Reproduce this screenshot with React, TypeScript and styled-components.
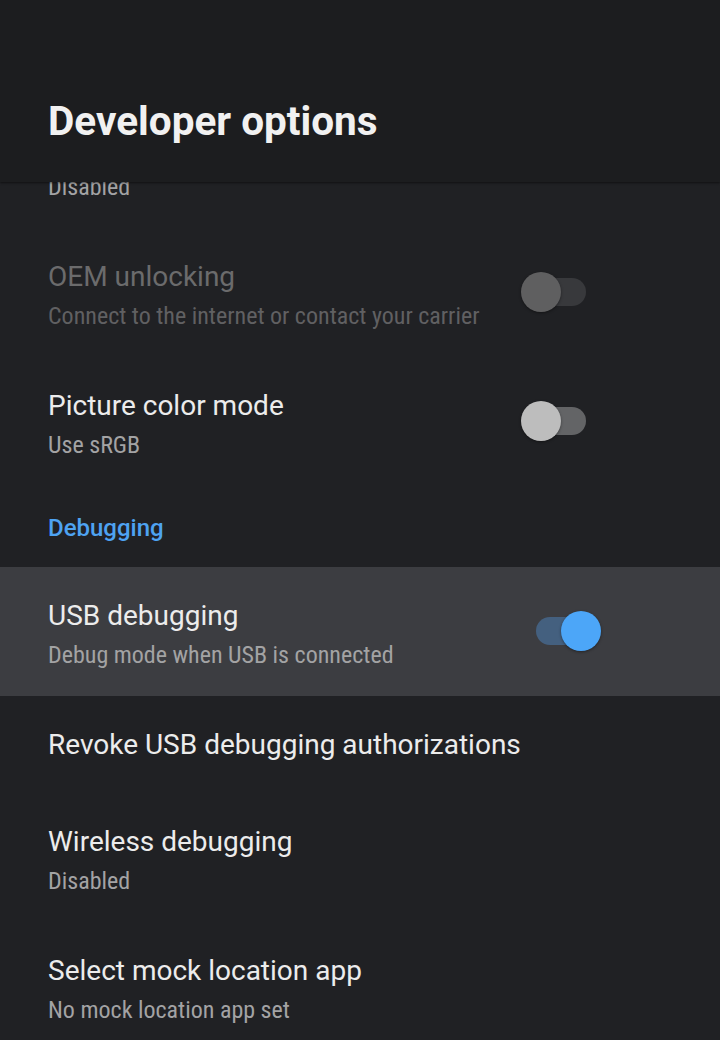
import React from 'react';
import styled, { createGlobalStyle } from 'styled-components';

const Global = createGlobalStyle`
  html, body { margin: 0; padding: 0; background: #202124; }
  body { font-family: Roboto, "Noto Sans", sans-serif; -webkit-font-smoothing: antialiased; }
  * { box-sizing: border-box; }
`;

const Screen = styled.div`
  position: relative;
  width: 720px;
  height: 1040px;
  overflow: hidden;
  background: #202124;
`;

const AppBar = styled.header`
  position: absolute;
  top: 0;
  left: 0;
  right: 0;
  height: 182px;
  padding: 97px 48px 0;
  background: #1c1d1f;
  box-shadow: 0 1px 2px rgba(0, 0, 0, 0.5);
  z-index: 2;
`;

const AppTitle = styled.h1`
  margin: 0;
  font-family: Roboto, "Noto Sans", sans-serif;
  font-weight: 700;
  font-size: 40.5px;
  line-height: 48px;
  color: #f1f1f1;
`;

const List = styled.div`
  display: flex;
  flex-direction: column;
  padding-top: 99px;
`;

const Row = styled.div<{ $summary: boolean; $active?: boolean }>`
  display: flex;
  align-items: center;
  padding: 31px 0 ${(p) => (p.$summary ? 25.7 : 30)}px 48px;
  background: ${(p) => (p.$active ? '#3c3d41' : 'transparent')};
`;

const TextCol = styled.div`
  flex: 1;
  min-width: 0;
  display: flex;
  flex-direction: column;
`;

const Title = styled.div<{ $disabled?: boolean }>`
  font-family: Roboto, "Noto Sans", sans-serif;
  font-size: 28px;
  line-height: 36px;
  color: ${(p) => (p.$disabled ? '#6b6b6c' : '#ececec')};
  white-space: nowrap;
`;

const Summary = styled.div<{ $disabled?: boolean }>`
  margin-top: 6.3px;
  font-family: "Roboto Condensed", Roboto, "Noto Sans", sans-serif;
  font-stretch: condensed;
  font-size: 24px;
  line-height: 30px;
  color: ${(p) => (p.$disabled ? '#606062' : '#a3a3a4')};
  white-space: nowrap;
`;

const Category = styled.div`
  padding: 26.8px 48px 24.2px;
  font-family: Roboto, "Noto Sans", sans-serif;
  font-weight: 500;
  font-size: 24px;
  line-height: 30px;
  color: #4ea3f2;
`;

const SwitchTrack = styled.span<{ $on: boolean; $disabled?: boolean }>`
  position: relative;
  flex: none;
  display: block;
  width: 64px;
  height: 28px;
  margin-right: ${(p) => (p.$on ? 120 : 134)}px;
  margin-top: -6px;
  border-radius: 14px;
  background: ${(p) => (p.$on ? '#44607f' : p.$disabled ? '#38393c' : '#636466')};
`;

const SwitchThumb = styled.span<{ $on: boolean; $disabled?: boolean }>`
  position: absolute;
  top: -6px;
  left: ${(p) => (p.$on ? 25 : -1)}px;
  width: 40px;
  height: 40px;
  border-radius: 50%;
  background: ${(p) => (p.$on ? '#4ca6f8' : p.$disabled ? '#5f5f60' : '#bdbdbd')};
  box-shadow: 0 1px 3px rgba(0, 0, 0, 0.4);
`;

type Item = {
  title: string;
  summary?: string;
  toggle?: boolean;
  on?: boolean;
  disabled?: boolean;
  active?: boolean;
};

const Switch = ({ on, disabled }: { on: boolean; disabled?: boolean }) => (
  <SwitchTrack $on={on} $disabled={disabled}>
    <SwitchThumb $on={on} $disabled={disabled} />
  </SwitchTrack>
);

const Pref = ({ item }: { item: Item }) => (
  <Row $summary={!!item.summary} $active={item.active}>
    <TextCol>
      <Title $disabled={item.disabled}>{item.title}</Title>
      {item.summary && <Summary $disabled={item.disabled}>{item.summary}</Summary>}
    </TextCol>
    {item.toggle && <Switch on={!!item.on} disabled={item.disabled} />}
  </Row>
);

const before: Item[] = [
  { title: 'Enable Bluetooth HCI snoop log', summary: 'Disabled' },
  { title: 'OEM unlocking', summary: 'Connect to the internet or contact your carrier', toggle: true, disabled: true },
  { title: 'Picture color mode', summary: 'Use sRGB', toggle: true },
];

const after: Item[] = [
  { title: 'USB debugging', summary: 'Debug mode when USB is connected', toggle: true, on: true, active: true },
  { title: 'Revoke USB debugging authorizations' },
  { title: 'Wireless debugging', summary: 'Disabled' },
  { title: 'Select mock location app', summary: 'No mock location app set' },
];

export default function App() {
  return (
    <Screen>
      <Global />
      <AppBar>
        <AppTitle>Developer options</AppTitle>
      </AppBar>
      <List>
        {before.map((it) => (
          <Pref key={it.title} item={it} />
        ))}
        <Category>Debugging</Category>
        {after.map((it) => (
          <Pref key={it.title} item={it} />
        ))}
      </List>
    </Screen>
  );
}
